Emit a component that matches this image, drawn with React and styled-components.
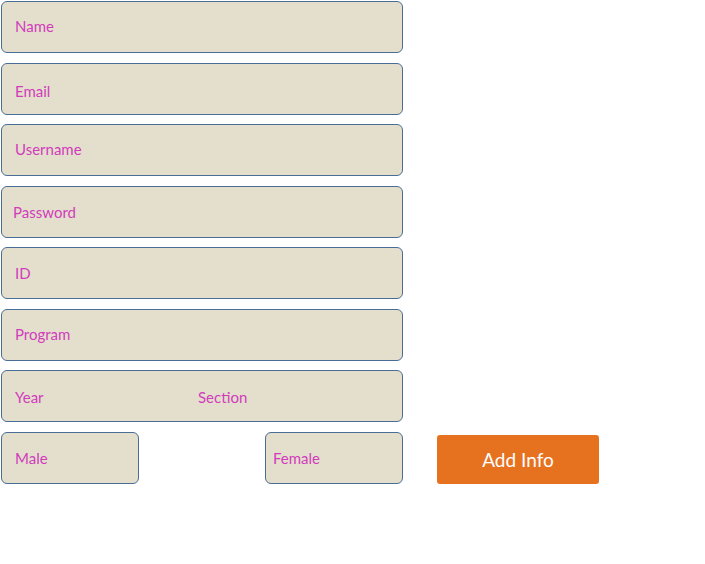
import React from 'react';
import styled, { createGlobalStyle } from 'styled-components';

const GlobalStyle = createGlobalStyle`
  body {
    margin: 0;
    background: #ffffff;
    font-family: Lato, "Open Sans", sans-serif;
  }
`;

const Form = styled.form`
  width: 402px;
  padding: 1px 0 0 1px;
  display: flex;
  flex-direction: column;
  gap: 9.5px;
`;

const Field = styled.div`
  box-sizing: border-box;
  flex: none;
  width: ${p => p.$width || '402px'};
  height: 52px;
  display: flex;
  align-items: center;
  padding-left: ${p => p.$pad || '13px'};
  background: #e4dfcc;
  border: 1.6px solid #4a6d96;
  border-radius: 6px;
`;

const Input = styled.input`
  flex: ${p => (p.$width ? `0 0 ${p.$width}` : '1')};
  min-width: 0;
  margin-top: ${p => p.$shift || '0px'};
  padding: 0;
  border: none;
  outline: none;
  background: transparent;
  font-family: Lato, "Open Sans", sans-serif;
  font-size: 15px;
  color: #d13cbd;

  &::placeholder {
    color: #d13cbd;
    opacity: 1;
  }
`;

const BottomRow = styled.div`
  display: flex;
  align-items: flex-start;
`;

const Gap = styled.div`
  width: ${p => p.$w};
  flex: none;
`;

const AddButton = styled.button`
  flex: none;
  width: 162px;
  height: 49px;
  margin-top: 3px;
  padding: 0;
  border: none;
  border-radius: 3px;
  background: #e6711f;
  color: #ffffff;
  font-family: Lato, "Open Sans", sans-serif;
  font-size: 19px;
  white-space: nowrap;
  cursor: pointer;
`;

export default function App() {
  return (
    <>
      <GlobalStyle />
      <Form onSubmit={e => e.preventDefault()}>
        <Field><Input placeholder="Name" $shift="-2px" /></Field>
        <Field><Input placeholder="Email" $shift="4px" /></Field>
        <Field><Input placeholder="Username" $shift="-2px" /></Field>
        <Field $pad="11px"><Input placeholder="Password" /></Field>
        <Field><Input placeholder="ID" /></Field>
        <Field><Input placeholder="Program" $shift="-2px" /></Field>
        <Field>
          <Input placeholder="Year" $width="183px" $shift="2px" />
          <Input placeholder="Section" $shift="2px" />
        </Field>
        <BottomRow>
          <Field $width="138px"><Input placeholder="Male" /></Field>
          <Gap $w="126px" />
          <Field $width="138px" $pad="7px"><Input placeholder="Female" /></Field>
          <Gap $w="34px" />
          <AddButton type="button">Add Info</AddButton>
        </BottomRow>
      </Form>
    </>
  );
}
